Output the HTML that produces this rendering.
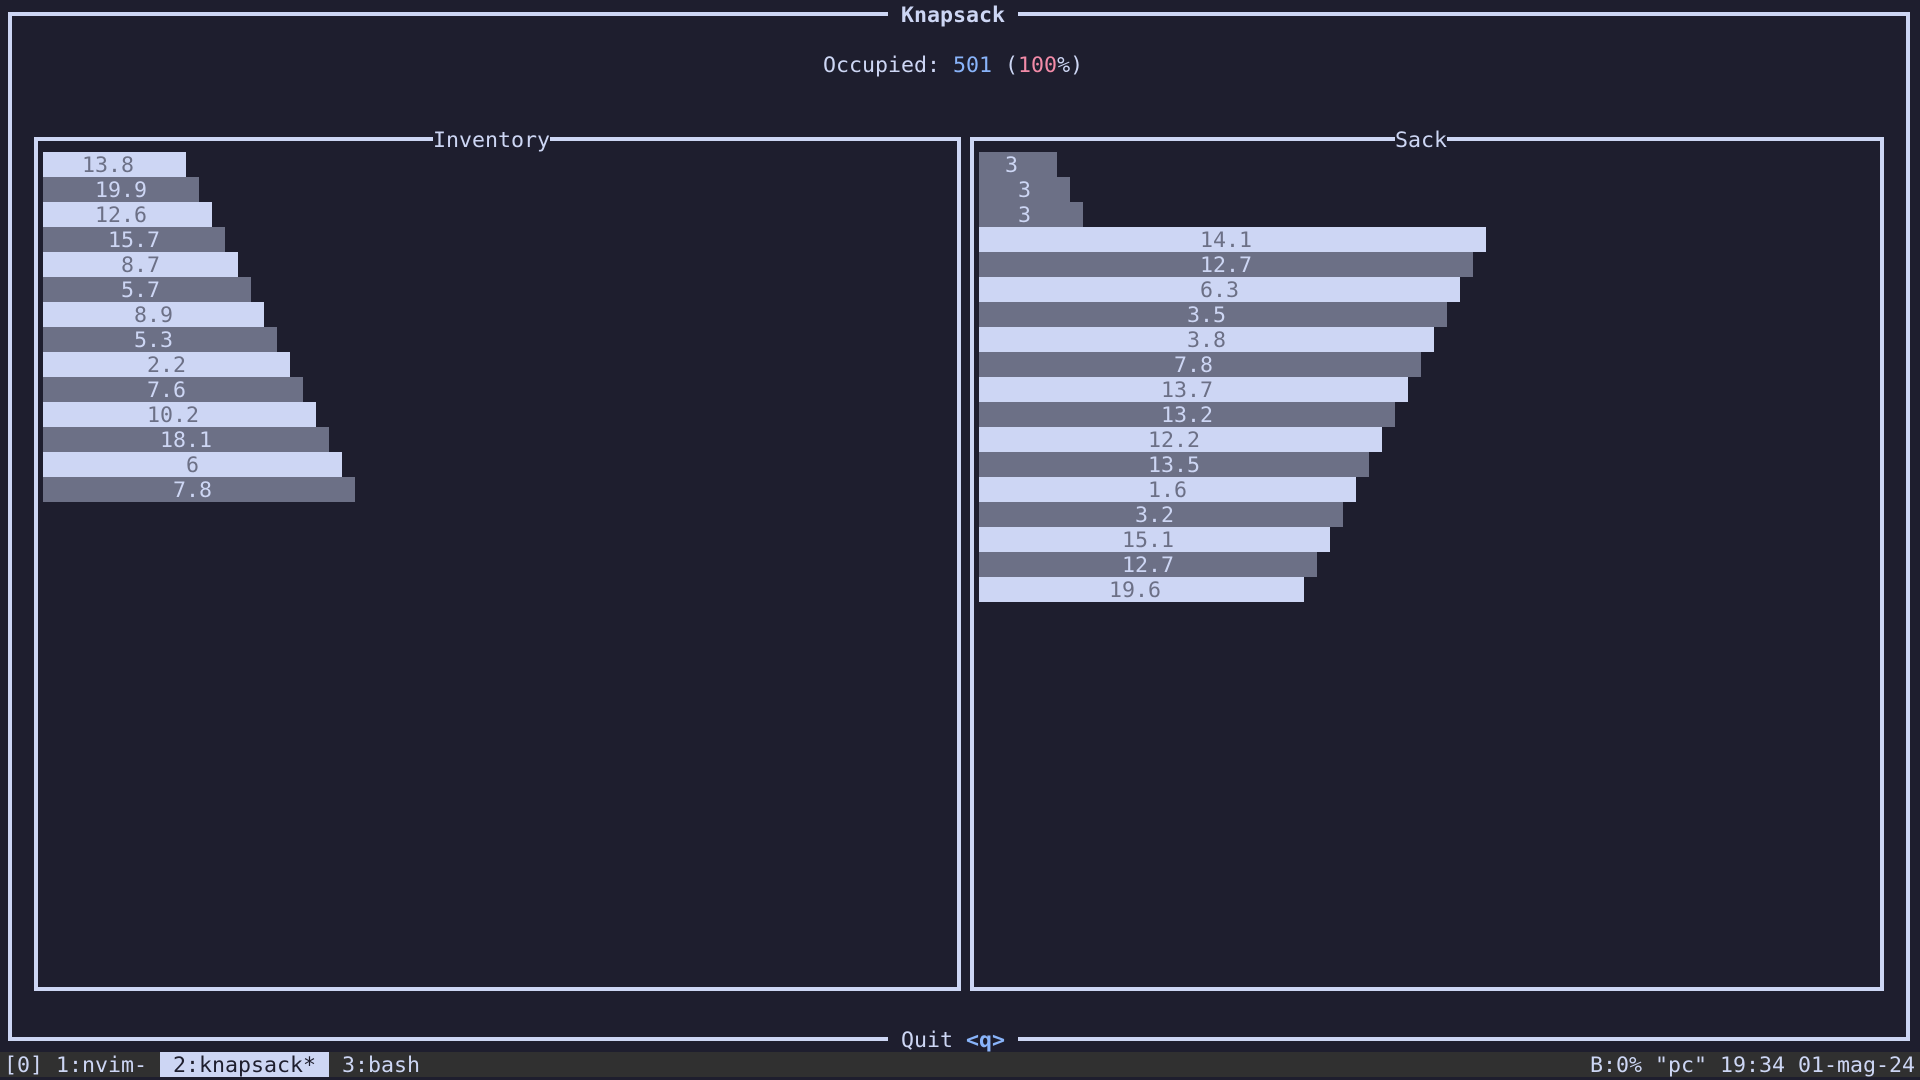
<!DOCTYPE html>
<html><head><meta charset="utf-8"><style>
html,body{margin:0;padding:0;background:#1e1e2e;width:1920px;height:1080px;overflow:hidden;position:relative;font-family:"DejaVu Sans Mono","Liberation Mono",monospace;font-size:21.6px;color:#cdd6f4}
.b{position:absolute;border:4px solid #cdd6f4;box-sizing:border-box}
.t{position:absolute;height:25px;line-height:27px;white-space:pre;background:#1e1e2e;overflow:hidden}
.r{position:absolute;height:25px;line-height:27px;white-space:pre;overflow:hidden}
.L{background:#cdd6f4;color:#6c7086}
.D{background:#6c7086;color:#cdd6f4}
</style></head><body>
<div class="b" style="left:8px;top:12px;width:1902px;height:1029px"></div>
<div class="b" style="left:34px;top:137px;width:927px;height:854px"></div>
<div class="b" style="left:970px;top:137px;width:914px;height:854px"></div>

<div class="t" style="left:888px;top:2px;font-weight:bold"> Knapsack </div>
<div class="t" style="left:823px;top:52px">Occupied: <span style="color:#89b4fa">501</span> (<span style="color:#f38ba8">100</span>%)</div>
<div class="t" style="left:433px;top:127px">Inventory</div>
<div class="t" style="left:1395px;top:127px">Sack</div>
<div class="t" style="left:888px;top:1027px"> Quit <b style="color:#89b4fa">&lt;q&gt;</b> </div>

<div class="r L" style="left:43px;top:152px;width:143px;padding-left:39px;box-sizing:border-box">13.8</div>
<div class="r D" style="left:43px;top:177px;width:156px;padding-left:52px;box-sizing:border-box">19.9</div>
<div class="r L" style="left:43px;top:202px;width:169px;padding-left:52px;box-sizing:border-box">12.6</div>
<div class="r D" style="left:43px;top:227px;width:182px;padding-left:65px;box-sizing:border-box">15.7</div>
<div class="r L" style="left:43px;top:252px;width:195px;padding-left:78px;box-sizing:border-box">8.7</div>
<div class="r D" style="left:43px;top:277px;width:208px;padding-left:78px;box-sizing:border-box">5.7</div>
<div class="r L" style="left:43px;top:302px;width:221px;padding-left:91px;box-sizing:border-box">8.9</div>
<div class="r D" style="left:43px;top:327px;width:234px;padding-left:91px;box-sizing:border-box">5.3</div>
<div class="r L" style="left:43px;top:352px;width:247px;padding-left:104px;box-sizing:border-box">2.2</div>
<div class="r D" style="left:43px;top:377px;width:260px;padding-left:104px;box-sizing:border-box">7.6</div>
<div class="r L" style="left:43px;top:402px;width:273px;padding-left:104px;box-sizing:border-box">10.2</div>
<div class="r D" style="left:43px;top:427px;width:286px;padding-left:117px;box-sizing:border-box">18.1</div>
<div class="r L" style="left:43px;top:452px;width:299px;padding-left:143px;box-sizing:border-box">6</div>
<div class="r D" style="left:43px;top:477px;width:312px;padding-left:130px;box-sizing:border-box">7.8</div>

<div class="r D" style="left:979px;top:152px;width:78px;padding-left:26px;box-sizing:border-box">3</div>
<div class="r D" style="left:979px;top:177px;width:91px;padding-left:39px;box-sizing:border-box">3</div>
<div class="r D" style="left:979px;top:202px;width:104px;padding-left:39px;box-sizing:border-box">3</div>
<div class="r L" style="left:979px;top:227px;width:507px;padding-left:221px;box-sizing:border-box">14.1</div>
<div class="r D" style="left:979px;top:252px;width:494px;padding-left:221px;box-sizing:border-box">12.7</div>
<div class="r L" style="left:979px;top:277px;width:481px;padding-left:221px;box-sizing:border-box">6.3</div>
<div class="r D" style="left:979px;top:302px;width:468px;padding-left:208px;box-sizing:border-box">3.5</div>
<div class="r L" style="left:979px;top:327px;width:455px;padding-left:208px;box-sizing:border-box">3.8</div>
<div class="r D" style="left:979px;top:352px;width:442px;padding-left:195px;box-sizing:border-box">7.8</div>
<div class="r L" style="left:979px;top:377px;width:429px;padding-left:182px;box-sizing:border-box">13.7</div>
<div class="r D" style="left:979px;top:402px;width:416px;padding-left:182px;box-sizing:border-box">13.2</div>
<div class="r L" style="left:979px;top:427px;width:403px;padding-left:169px;box-sizing:border-box">12.2</div>
<div class="r D" style="left:979px;top:452px;width:390px;padding-left:169px;box-sizing:border-box">13.5</div>
<div class="r L" style="left:979px;top:477px;width:377px;padding-left:169px;box-sizing:border-box">1.6</div>
<div class="r D" style="left:979px;top:502px;width:364px;padding-left:156px;box-sizing:border-box">3.2</div>
<div class="r L" style="left:979px;top:527px;width:351px;padding-left:143px;box-sizing:border-box">15.1</div>
<div class="r D" style="left:979px;top:552px;width:338px;padding-left:143px;box-sizing:border-box">12.7</div>
<div class="r L" style="left:979px;top:577px;width:325px;padding-left:130px;box-sizing:border-box">19.6</div>

<div style="position:absolute;left:0;top:1052px;width:1920px;height:25px;background:#303030"></div>
<div class="r" style="left:4px;top:1052px">[0] 1:nvim- </div>
<div class="r" style="left:160px;top:1052px;background:#cdd6f4;color:#1e1e2e"> 2:knapsack* </div>
<div class="r" style="left:329px;top:1052px"> 3:bash</div>
<div class="r" style="left:1590px;top:1052px">B:0% "pc" 19:34 01-mag-24</div>
</body></html>
